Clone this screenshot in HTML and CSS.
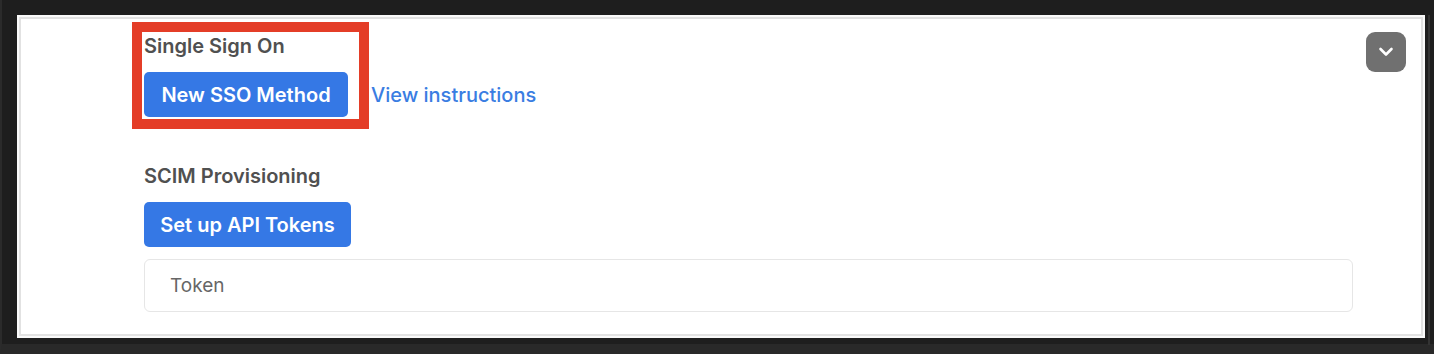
FILE: index.html
```html
<!DOCTYPE html>
<html lang="en">
<head>
<meta charset="utf-8">
<title>SSO settings</title>
<link rel="stylesheet" href="styles.css">
</head>
<body>
<div class="screen">
  <div class="panel">
    <div class="main">
      <section class="section">
        <h2 class="section-title">Single Sign On</h2>
        <div class="actions">
          <button class="btn-primary btn-sso" type="button">New SSO Method</button>
          <a class="link" href="#">View instructions</a>
        </div>
      </section>
      <section class="section section-scim">
        <h2 class="section-title">SCIM Provisioning</h2>
        <div class="actions">
          <button class="btn-primary btn-api" type="button">Set up API Tokens</button>
        </div>
        <div class="token-field">Token</div>
      </section>
    </div>
    <button class="collapse-btn" type="button" aria-label="Collapse">
      <svg width="16" height="10" viewBox="0 0 16 10" aria-hidden="true">
        <path d="M2.5 2 L8 7.5 L13.5 2" fill="none" stroke="#ffffff" stroke-width="2.6" stroke-linecap="round" stroke-linejoin="round"/>
      </svg>
    </button>
    <div class="highlight" aria-hidden="true"></div>
  </div>
  <div class="scroll-line"></div>
</div>
</body>
</html>
```

FILE: styles.css
```css
* { box-sizing: border-box; }

html, body {
  margin: 0;
  padding: 0;
  background: #1e1e1e;
}

body {
  font-family: Inter, "Noto Sans", "Liberation Sans", sans-serif;
}

.screen {
  width: 1434px;
  height: 354px;
  display: flex;
  align-items: flex-start;
  border-left: 2px solid #2b2b2b;
  border-bottom: 10px solid #292929;
  padding: 15px 0 0 15px;
}

.panel {
  position: relative;
  width: 1408px;
  height: 323px;
  background: #ffffff;
  box-shadow: inset 0 0 0 2px #fafafa, inset 0 0 0 4px #e2e2e2;
  display: flex;
  align-items: flex-start;
  padding: 17px 19px 0 127px;
}

.scroll-line {
  width: 2px;
  height: 330px;
  margin-left: 3px;
  background: #333333;
}

.main {
  flex: 1;
  padding-top: 2px;
}

.section-title {
  margin: 0 0 14px;
  font-size: 20px;
  line-height: 24px;
  font-weight: 600;
  color: #505050;
  letter-spacing: 0;
}

.section-scim {
  margin-top: 47px;
}

.actions {
  display: flex;
  align-items: center;
  gap: 23px;
}

.btn-primary {
  height: 45px;
  border: none;
  border-radius: 5px;
  background: #3578e5;
  color: #ffffff;
  font-family: inherit;
  font-size: 20px;
  font-weight: 600;
  line-height: 24px;
  white-space: nowrap;
  display: flex;
  align-items: center;
  justify-content: center;
  padding: 0;
  margin: 0;
  cursor: pointer;
}

.btn-sso { width: 204px; }
.btn-api { width: 207px; }

.link {
  font-size: 20px;
  font-weight: 500;
  color: #3a7de2;
  text-decoration: none;
  line-height: 24px;
}

.token-field {
  margin-top: 12px;
  height: 53px;
  border: 1px solid #e6e6e6;
  border-radius: 6px;
  display: flex;
  align-items: center;
  padding-left: 25px;
  font-size: 19px;
  color: #666666;
}

.collapse-btn {
  margin-left: 13px;
  width: 40px;
  height: 40px;
  flex: none;
  border: none;
  border-radius: 9px;
  background: #707070;
  display: flex;
  align-items: center;
  justify-content: center;
  padding: 0;
  cursor: pointer;
}

.highlight {
  position: absolute;
  left: 115px;
  top: 7px;
  width: 237px;
  height: 107px;
  border: 10px solid #e43d27;
  pointer-events: none;
}
```
